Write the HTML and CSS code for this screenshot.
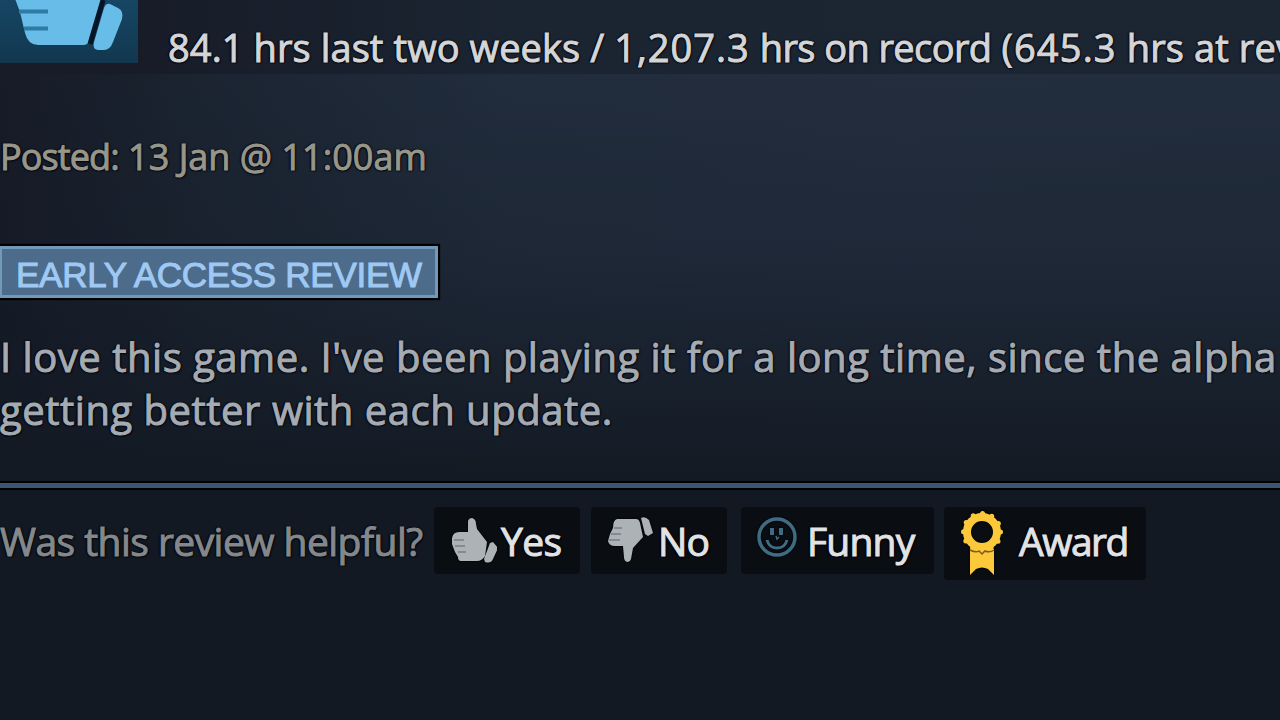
FILE: index.html
```html
<!DOCTYPE html>
<html lang="en">
<head>
<meta charset="utf-8">
<title>Review</title>
<link rel="stylesheet" href="styles.css">
</head>
<body>
<main class="review">
  <header class="header">
    <div class="thumb">
      <svg class="thumb-icon" width="138" height="63" viewBox="0 0 138 63">
        <path d="M14 -4 L20 12 L25 33 Q28 45 38 45 H83 Q88 45 90 40 L103 -4Z" fill="#68bce8"/>
        <path d="M104 8 Q106 3 110 4 L118 8 Q124 11 122 19 L113 42 Q110 50 104 50 H98 Q92 49 94 42Z" fill="#68bce8"/>
        <path d="M103 0 L90 44" stroke="#061525" stroke-width="5"/>
        <path d="M19 11.500H48M24 28.500H48" stroke="#2f7ba5" stroke-width="4"/>
      </svg>
    </div>
    <p class="hours">84.1 hrs last two weeks / <span class="total">1,207.3</span> <span class="record">hrs on record</span> <span class="at-review">(645.3</span> hrs at rev</p>
  </header>
  <section class="body">
    <p class="posted"><span class="label">Posted:</span> 13 Jan @ 11:00am</p>
    <div class="badge">EARLY ACCESS REVIEW</div>
    <p class="content">I love this game. I've been playing it for a long time, since the alpha<br>getting better with each update.</p>
  </section>
  <div class="divider"></div>
  <footer class="controls">
    <span class="question">Was this review helpful?</span>
    <button class="btn yes">
      <svg class="icon" width="46" height="48" viewBox="0 0 46 48">
        <path d="M17 5 Q18 2 21 2 Q25 3 25 8 L26 13 L36 26 L34 40 Q31 45 26 45 H10 Q7 45 7 41 L4 36 L1 28 L1 22 Q2 16 8 16 H17Z M39 27 L42 26 L47 32 L42 43 Q40 48 34 46 L33 43Z" fill="#adb2b6"/>
        <path d="M3 24H13M4 30H14M7 36H15" stroke="#777d82" stroke-width="1.500"/>
      </svg><span>Yes</span>
    </button>
    <button class="btn no">
      <svg class="icon" width="46" height="48" viewBox="0 0 46 48">
        <path d="M10 4 H29 Q32 4 33 8 L36 22 L26 33 L24 44 Q23 47 20 47 Q17 46 17 42 L16 31 H8 Q2 31 1 26 L3 19 L6 13 Q6 5 10 4Z M34 3 Q38 1 42 5 L46 18 L41 21 L38 19Z" fill="#adb2b6"/>
        <path d="M7 13H15M4 19H14M2 25H13" stroke="#777d82" stroke-width="1.500"/>
      </svg><span>No</span>
    </button>
    <button class="btn funny">
      <svg class="icon" width="42" height="44" viewBox="0 0 42 44">
        <circle cx="21" cy="22" r="18" fill="none" stroke="#3f6c83" stroke-width="3.500"/>
        <path d="M16 13V20M25 13V20" stroke="#3f6c83" stroke-width="4"/>
        <path d="M20 21 L21 24 L23 22" fill="none" stroke="#3f6c83" stroke-width="1.500"/>
        <path d="M11 25 Q13 33 21 33 Q29 33 31 25" fill="none" stroke="#3f6c83" stroke-width="3"/>
      </svg><span>Funny</span>
    </button>
    <button class="btn award">
      <svg class="icon" width="46" height="68" viewBox="0 0 46 68">
        <path d="M11 39H35V65L29 59Q23 56 17 59L11 65Z" fill="#fcc93b"/>
        <circle cx="23" cy="22" r="15" fill="none" stroke="#fcc93b" stroke-width="8"/>
        <circle cx="23" cy="22" r="18.500" fill="none" stroke="#fcc93b" stroke-width="5" stroke-linecap="round" stroke-dasharray="0 9.687"/>
        <path d="M11 40 Q17 43 20 41 L23 44 L26 41 Q31 43 35 40" fill="none" stroke="#7b5d20" stroke-width="1.500"/>
      </svg><span>Award</span>
    </button>
  </footer>
</main>
</body>
</html>
```
FILE: styles.css
```css
* { box-sizing: border-box; }
body {
  margin: 0;
  width: 1280px;
  height: 720px;
  overflow: hidden;
  background: #121923;
  font-family: "Open Sans", "Noto Sans", sans-serif;
}
p { margin: 0; }
.review {
  height: 720px;
  display: flex;
  flex-direction: column;
  text-shadow: 0 0 2px #000, 0 0 2px #000, 1px 1px 2px #00000f, -1px 0 2px #00000f;
  -webkit-text-stroke: 1px currentColor;
  white-space: nowrap;
}
.header {
  height: 74px;
  flex: none;
  display: flex;
  background: linear-gradient(90deg, #171c28 140px, #1b2431 500px, #1c2633);
}
.thumb {
  width: 138px;
  height: 63px;
  flex: none;
  background: linear-gradient(180deg, #164664, #12374f);
}
.thumb-icon { display: block; }
.hours { width: 1114px; overflow: hidden; margin-left: 28px; padding: 20px 0 0 2px; line-height: 55px; font-size: 38px; letter-spacing: .1px; color: #d4d5d7; }
.total { letter-spacing: 1px; }
.record { letter-spacing: -.6px; }
.at-review { letter-spacing: 1.200px; }
.body {
  height: 407px;
  flex: none;
  background:
    linear-gradient(180deg, rgba(18, 25, 35, 0) 0%, rgba(18, 25, 35, .25) 45%, #131a24 100%),
    linear-gradient(90deg, #161b27 0, #1b2431 200px, #212c3c 500px, #232d3e 900px, #222d3d 100%);
}
.posted { padding-top: 56px; line-height: 54px; font-size: 36px; letter-spacing: .02px; color: #97968a; }
.label { letter-spacing: -.9px; }
.badge {
  width: 438px;
  height: 52px;
  margin-top: 62px;
  padding: 4px 0 0 14px;
  border: 3px solid #7299b9;
  border-left-width: 2px;
  background: #4d6b8a;
  box-shadow: 0 0 1px 2px #000;
  color: #9fc9f3;
  font: 35px/44px "Liberation Sans", sans-serif;
  letter-spacing: -.28px;
  text-shadow: none;
}
.content { padding-top: 32px; font-size: 40px; letter-spacing: .52px; line-height: 53px; color: #a5abb2; }
.divider {
  height: 9px;
  flex: none;
  background: #3c5575;
  border: solid #000;
  border-width: 2px 0;
}
.controls {
  display: flex;
  align-items: flex-start;
  padding-top: 17px;
}
.question { width: 434px; line-height: 68px; font-size: 39px; letter-spacing: -.54px; color: #85888b; }
.btn {
  height: 67px;
  display: flex;
  align-items: center;
  padding: 0;
  border: 0;
  border-radius: 4px;
  background: #0a0d12;
  color: #e2e3e4;
  font: 39px/67px "Open Sans", "Noto Sans", sans-serif;
  text-shadow: inherit;
}
.icon { flex: none; filter: drop-shadow(0 0 1px #000); }
.yes { width: 146px; padding-left: 17px; margin-right: 11px; }
.yes .icon { margin-top: -2px; }
.yes span { margin-left: 4px; letter-spacing: -.6px; }
.no { width: 136px; padding-left: 16px; margin-right: 14px; }
.no .icon { margin-top: -3px; }
.no span { margin-left: 5px; letter-spacing: -.8px; }
.funny { width: 193px; padding-left: 15px; margin-right: 10px; }
.funny .icon { margin-top: -7px; }
.funny span { margin-left: 9px; letter-spacing: -.8px; }
.award { width: 202px; height: 73px; padding-left: 15px; }
.award .icon { margin-top: 0; }
.award span { margin: -7px 0 0 14px; letter-spacing: -1.500px; }
```
